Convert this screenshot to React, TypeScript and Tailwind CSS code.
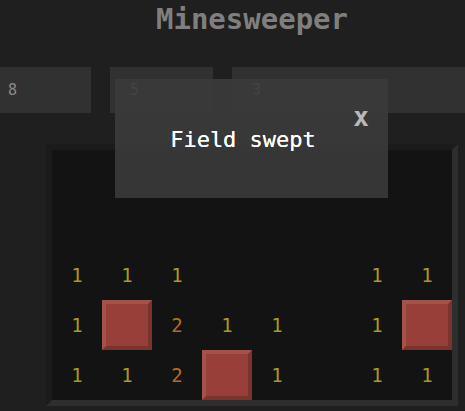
import React from 'react'

type Cell = number | 'mine' | null

// 5 rows x 8 cols, rows 0-1 blank revealed
const board: Cell[][] = [
  [null, null, null, null, null, null, null, null],
  [null, null, null, null, null, null, null, null],
  [1, 1, 1, null, null, null, 1, 1],
  [1, 'mine', 2, 1, 1, null, 1, 'mine'],
  [1, 1, 2, 'mine', 1, null, 1, 1],
]

const numColor: Record<number, string> = {
  1: 'text-[#ac9a1c]',
  2: 'text-[#b46c20]',
}

function BoardCell({ value }: { value: Cell }) {
  if (value === 'mine') {
    return (
      <div className="w-[50px] h-[50px] bg-[#993f39] border-4 border-t-[#a4534c] border-l-[#a4534c] border-b-[#7b332e] border-r-[#7b332e]" />
    )
  }
  return (
    <div className={`w-[50px] h-[50px] flex items-center justify-center text-[19px] ${value ? numColor[value] : ''}`}>
      {value ?? ''}
    </div>
  )
}

function Stat({ value, className }: { value: string; className: string }) {
  return (
    <div className={`shrink-0 h-[46px] bg-[#313131] flex items-center pl-5 text-[15px] text-[#8a8a8a] ${className}`}>
      {value}
    </div>
  )
}

export default function App() {
  return (
    <div className="relative w-[465px] h-[411px] overflow-hidden bg-[#1f1f1f] font-['DejaVu_Sans_Mono',monospace]">
      <div className="w-[504px]">
        <h1 className="h-[36px] pt-[1px] text-center text-[29px] leading-[36px] font-bold text-[#7f7f7f]">
          Minesweeper
        </h1>

        <div className="flex gap-[19px] mt-[31px] -ml-[12px]">
          <Stat value="8" className="w-[103px]" />
          <Stat value="5" className="w-[103px]" />
          <Stat value="3" className="w-[284px]" />
        </div>

        <div className="mt-[31px] ml-[46px] w-[412px] border-[6px] border-t-[#1b1b1b] border-l-[#1b1b1b] border-b-[#2e2e2e] border-r-[#2e2e2e] bg-[#131313]">
          {board.map((row, r) => (
            <div key={r} className="flex">
              {row.map((c, i) => (
                <BoardCell key={i} value={c} />
              ))}
            </div>
          ))}
        </div>
      </div>

      {/* result dialog */}
      <div className="absolute left-[115px] top-[79px] w-[273px] h-[119px] bg-[#3b3b3b]/90 flex items-center justify-center pr-[17px] pt-[1px]">
        <span className="text-[22px] text-white [text-shadow:0_0_0.4px_#fff]">Field swept</span>
        <button className="absolute right-[19px] top-[25px] text-[26px] leading-none font-bold text-[#b9b9b9]">x</button>
      </div>
    </div>
  )
}
